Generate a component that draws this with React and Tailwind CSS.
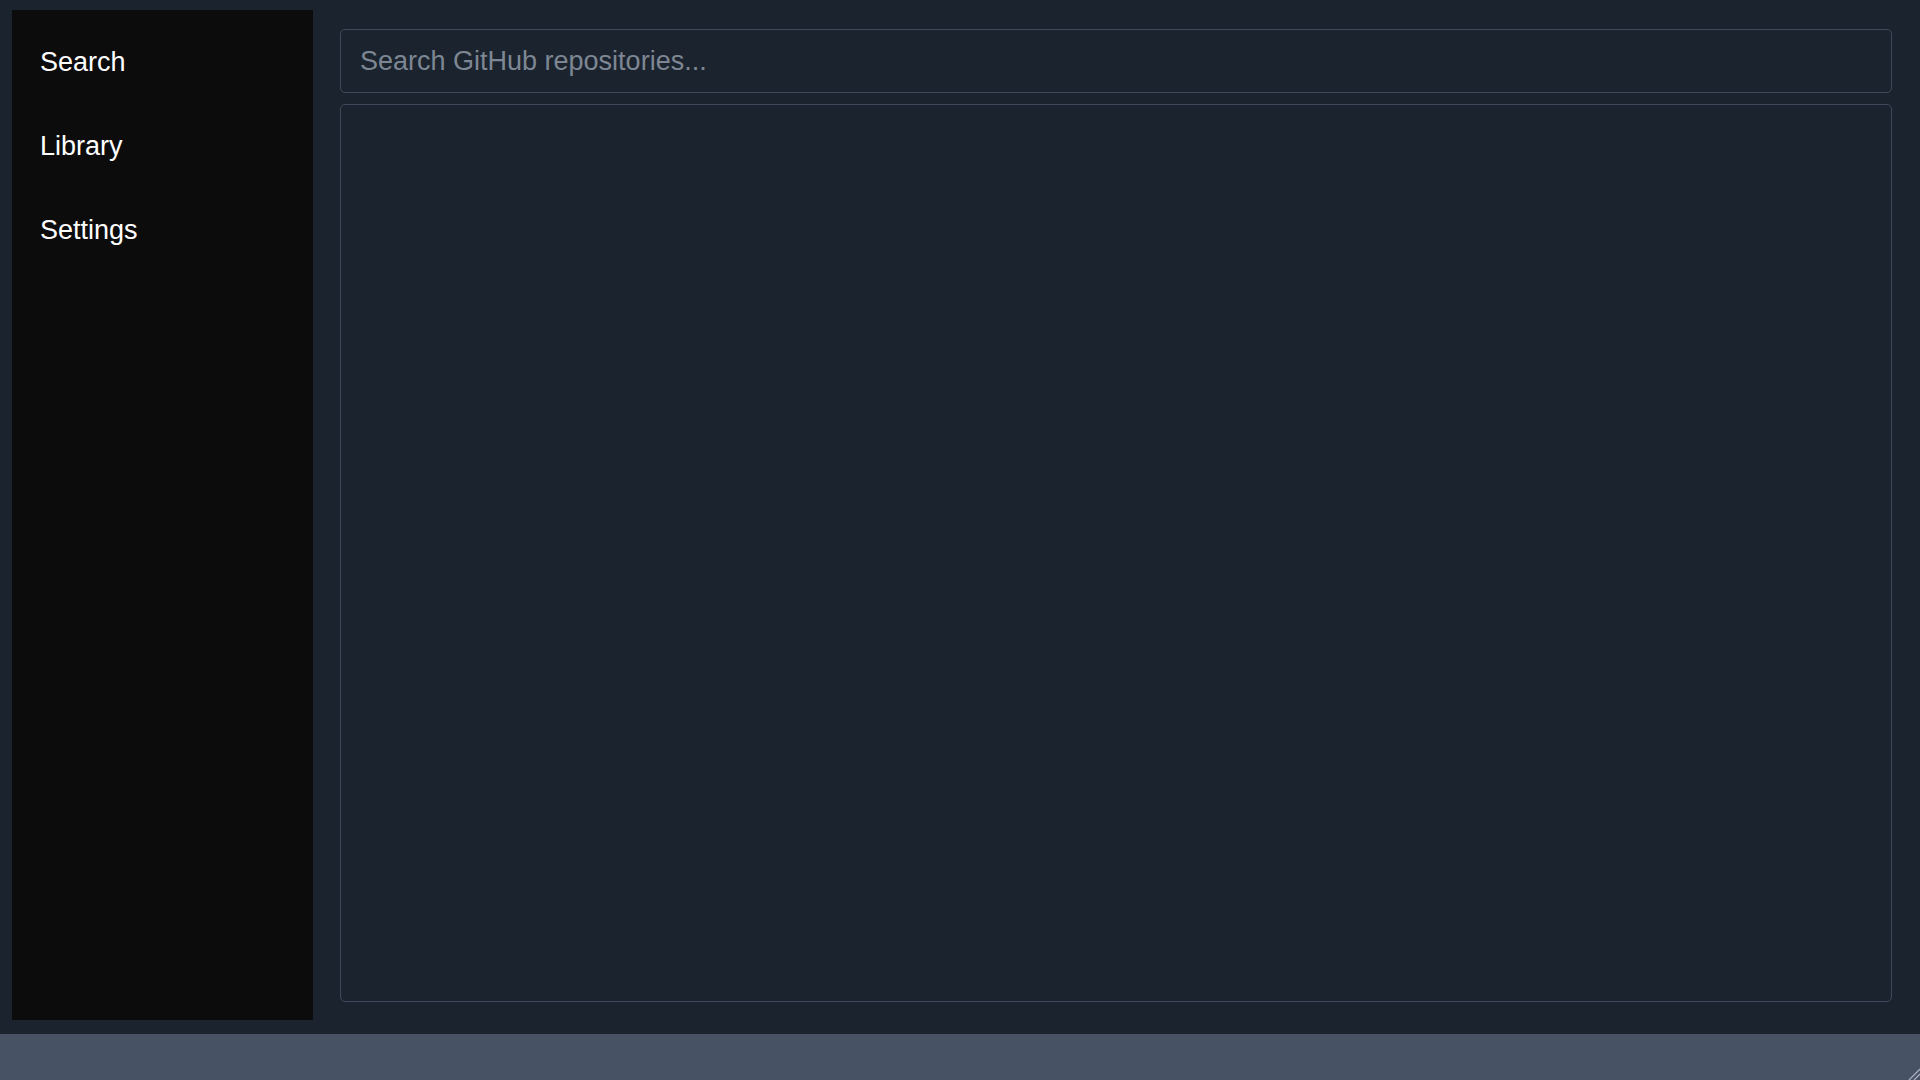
import { useState } from 'react';

// sidebar entries
const NAV_ITEMS = ['Search', 'Library', 'Settings'];

export default function App() {
    const [query, setQuery] = useState('');
    const [active, setActive] = useState('Search');

    return (
        <div className="w-[1920px] h-[1080px] flex flex-col bg-[#1b232e] overflow-hidden font-['Liberation_Sans',Arial,sans-serif]">
            <div className="flex-1 flex min-h-0">
                {/* Sidebar */}
                <nav className="w-[301px] ml-[12px] mt-[10px] mb-[14px] bg-[#0c0c0c] flex flex-col pt-[36px] pl-[28px]">
                    {NAV_ITEMS.map(item => (
                        <button
                            key={item}
                            onClick={() => setActive(item)}
                            className="text-left text-[27px] leading-[32px] text-white mb-[52px] cursor-pointer"
                        >
                            {item}
                        </button>
                    ))}
                </nav>

                {/* Main content */}
                <main className="flex-1 flex flex-col ml-[27px] mr-[28px] mt-[29px] mb-[32px] gap-[11px]">
                    <input
                        value={query}
                        onChange={e => setQuery(e.target.value)}
                        placeholder="Search GitHub repositories..."
                        className="h-[64px] w-full rounded-[5px] border border-[#3e495b] bg-[#1b232e] px-[19px] text-[27px] text-white placeholder:text-[#7d8793] outline-none"
                    />
                    <div className="flex-1 rounded-[5px] border border-[#3e495b]" />
                </main>
            </div>

            {/* Status bar */}
            <div className="h-[46px] bg-[#475365] relative">
                <svg className="absolute right-0 bottom-0" width="14" height="14" viewBox="0 0 14 14">
                    <line x1="3" y1="14" x2="14" y2="3" stroke="#a7b0bc" strokeWidth="1.3" />
                    <line x1="8" y1="14" x2="14" y2="8" stroke="#a7b0bc" strokeWidth="1.3" />
                </svg>
            </div>
        </div>
    );
}
